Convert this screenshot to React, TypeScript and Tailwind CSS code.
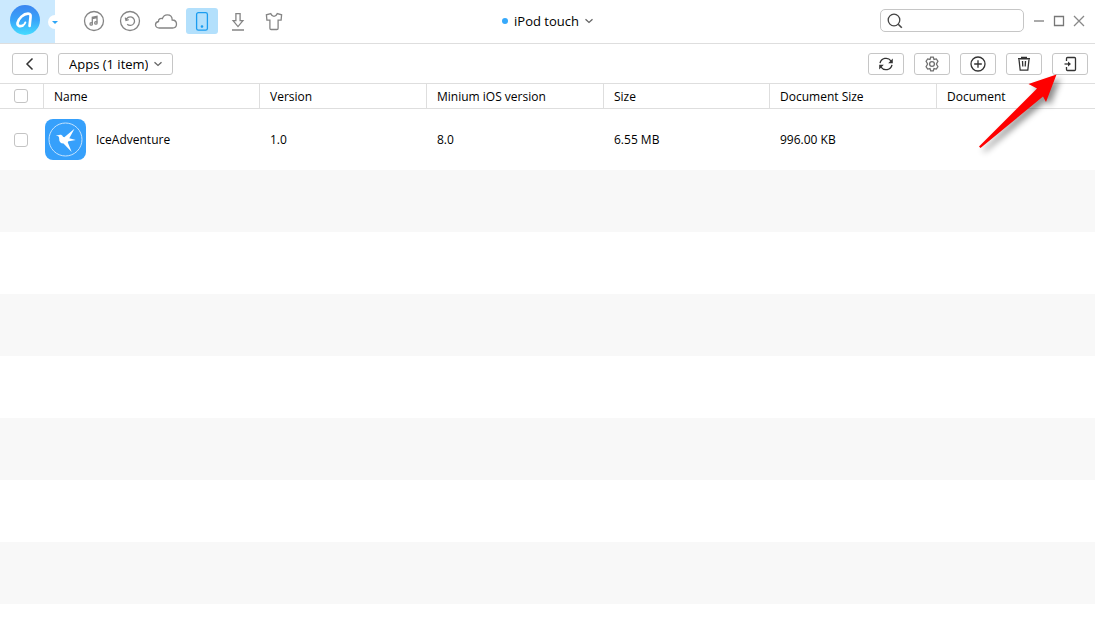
import React from "react";

const columns = [
  { label: "Name", width: "w-[216px]" },
  { label: "Version", width: "w-[167px]" },
  { label: "Minium iOS version", width: "w-[177px]" },
  { label: "Size", width: "w-[166px]" },
  { label: "Document Size", width: "w-[167px]" },
  { label: "Document", width: "" },
];

const apps = [
  {
    name: "IceAdventure",
    version: "1.0",
    minVersion: "8.0",
    size: "6.55 MB",
    documentSize: "996.00 KB",
  },
];

const EMPTY_ROWS = 8;

interface IconProps {
  children: React.ReactNode;
  size?: number;
  className?: string;
}

const Icon = ({ children, size = 24, className = "" }: IconProps) => (
  <svg
    width={size}
    height={size}
    viewBox={`0 0 ${size} ${size}`}
    fill="none"
    stroke="currentColor"
    strokeWidth="1.3"
    className={`shrink-0 ${className}`}
    aria-hidden="true"
  >
    {children}
  </svg>
);

const Chevron = () => (
  <Icon size={8} className="pointer-events-none -ml-3 text-[#666]">
    <path d="M0.5 2.2 4 5.4 7.5 2.2" />
  </Icon>
);

const Logo = () => (
  <svg width="30" height="30" viewBox="0 0 30 30" aria-hidden="true">
    <defs>
      <linearGradient id="logo" x1="0" y1="0" x2="0" y2="1">
        <stop offset="0" stopColor="#3d86f0" />
        <stop offset="0.5" stopColor="#38a4fa" />
        <stop offset="1" stopColor="#45dcff" />
      </linearGradient>
    </defs>
    <circle cx="15" cy="15" r="15" fill="url(#logo)" />
    <path
      d="M12.4 20.8C9.4 21.500 7 20.800 7.600 17.800 8.400 13.600 13.600 8.600 18 8.600c2.500 0 2.800 1.500 2.500 3.800l-.9 8.400"
      fill="none"
      stroke="#fff"
      strokeWidth="2.700"
      strokeLinecap="round"
      strokeLinejoin="round"
    />
    <path
      d="M12.400 20.800c1.600-.5 2.300-1.700 2.900-3.300"
      fill="none"
      stroke="#fff"
      strokeWidth="2"
      strokeLinecap="round"
    />
  </svg>
);

const AppIcon = () => (
  <svg
    width="41"
    height="41"
    viewBox="0 0 41 41"
    className="shrink-0"
    aria-hidden="true"
  >
    <rect width="41" height="41" rx="8" fill="#36a0fb" />
    <circle cx="20.5" cy="20.5" r="16.5" fill="none" stroke="#c4e3fe" />
    <path
      d="M10.800 16.400 14.300 16c1.300-.6 2.800 0 3.700 1.700l1.300.6L29.500 9.800 24.300 19.200l6.500 1.700-7.200 1.400c-.7.400-.9 1-.6 1.800l3.700 8.900-8.200-8.400c-2.900-.3-4.500-2-4.300-4.700 0-1.600-.6-2.600-1.500-2.900z"
      fill="#fff"
    />
  </svg>
);

const navItems = [
  {
    label: "Music",
    icon: (
      <>
        <circle cx="12" cy="12" r="9.5" />
        <path d="M10.300 14.600V8.400l4.700-1v6.200M10.300 9.500l4.700-1" />
        <circle cx="9.200" cy="14.900" r="1.200" />
        <circle cx="13.900" cy="13.900" r="1.200" />
      </>
    ),
  },
  {
    label: "Backup",
    icon: (
      <>
        <circle cx="12" cy="12" r="9.5" />
        <path d="M8 11.400A4.300 4.300 0 1 1 9.200 15.200M7.300 8.600l.7 2.900 2.700-.9" />
      </>
    ),
  },
  {
    label: "Cloud",
    icon: (
      <path d="M5.3 19C3 19 1.5 17.7 1.5 15.8c0-1.7 1.2-2.9 3-3.3-.2-2.3 2-3.7 3.8-2.8 1-2.7 2.7-3.8 4.9-3.8 3 0 5 2.1 5 5.1 2.6.1 4.3 1.7 4.3 4 0 2.4-1.6 4-4 4z" />
    ),
  },
  {
    label: "Device",
    icon: (
      <>
        <rect x="6.6" y="3.6" width="10.8" height="17.6" rx="1.8" />
        <circle cx="12" cy="17.5" r="0.7" fill="currentColor" />
      </>
    ),
  },
  {
    label: "Download",
    icon: (
      <>
        <path d="M9.9 4.6h4.2v7.1h2.8L12 17.6 7.1 11.7h2.8z" />
        <path d="M6 21h12" strokeWidth="1.5" />
      </>
    ),
  },
  {
    label: "Themes",
    icon: (
      <path d="M8.7 4.6 4.4 5.8l.5 5.3h3v8.2c0 .8.4 1.2 1.2 1.2h5.8c.8 0 1.2-.4 1.2-1.2v-8.2h3l.5-5.3-4.3-1.2c-.8 1.700-1.800 2.800-3.300 2.800S9.500 6.300 8.700 4.600z" />
    ),
  },
];

const actions = [
  {
    label: "Refresh",
    icon: (
      <>
        <path d="M3 8.200A6.200 6.200 0 0 1 14 5.800M15 9.800A6.200 6.200 0 0 1 4 12.200" />
        <path
          d="M15.800 3.600v4.600h-4.600zM2.200 14.400V9.800h4.600z"
          fill="currentColor"
          stroke="none"
        />
      </>
    ),
  },
  {
    label: "Settings",
    color: "text-[#707070]",
    icon: (
      <>
        <path d="M7.700 2.200h2.600l.7 2.200 2.300-.5 1.600 2.300L13.400 9l1.500 2.800-1.600 2.300-2.300-.5-.7 2.200H7.700L7 13.600l-2.300.5-1.600-2.300L4.600 9 3.100 6.200l1.600-2.300 2.300.5z" />
        <circle cx="9" cy="9" r="2.400" />
      </>
    ),
  },
  {
    label: "Add",
    icon: (
      <>
        <circle cx="9" cy="9" r="7" />
        <path d="M9 5.200v7.600M5.200 9h7.600" />
      </>
    ),
  },
  {
    label: "Delete",
    icon: (
      <>
        <path d="M3 3.800h12M6 2.500h6" strokeWidth="1.600" />
        <path d="m4 4.500 1.200 10.700h7.600L14 4.500M7.500 6l.3 5.500M10.500 6l-.3 5.500" />
      </>
    ),
  },
  {
    label: "Export to device",
    icon: (
      <>
        <path d="M5.500 6V3.500c0-.7.300-1 1-1h7c.7 0 1 .3 1 1v11c0 .7-.3 1-1 1h-7c-.7 0-1-.3-1-1V12" />
        <path d="M3.500 9h5" />
        <path d="M7 6.400 10 9l-3 2.600z" fill="currentColor" stroke="none" />
      </>
    ),
  },
];

const Checkbox = ({ label }: { label: string }) => (
  <input
    type="checkbox"
    aria-label={label}
    className="ml-[14px] block size-[14px] appearance-none rounded-[3px] border border-[#c4c4c4] bg-white checked:bg-[#36a0fb]"
  />
);

const Header = () => (
  <header className="grid h-11 shrink-0 grid-cols-[1fr_auto_1fr] items-center border-b border-[#dedede]">
    <div className="flex h-full items-center">
      <div className="relative flex h-full w-[55px] items-center bg-[#cbe9fe] pb-[3px] pl-[10px]">
        <Logo />
        <button
          aria-label="Main menu"
          className="absolute top-[15px] -right-[7px] flex size-[14px] items-center justify-center rounded-full bg-white"
        >
          <svg width="6" height="3" viewBox="0 0 6 3" aria-hidden="true">
            <path d="M0 0h6L3 3z" fill="#2ea6f7" />
          </svg>
        </button>
      </div>
      <nav className="flex gap-1 pb-[2px] pl-[23px]">
        {navItems.map((item) => (
          <button
            key={item.label}
            aria-label={item.label}
            className={`flex h-[26px] w-8 items-center justify-center rounded-[3px] ${
              item.label === "Device"
                ? "bg-[#b3e0fc] text-[#1a9cf0]"
                : "text-[#858585]"
            }`}
          >
            <Icon>{item.icon}</Icon>
          </button>
        ))}
      </nav>
    </div>
    <div className="flex items-center pb-[2px]">
      <span className="mr-[6px] size-[6px] rounded-full bg-[#36a9fb]" />
      <select
        aria-label="Device"
        className="field-sizing-content appearance-none pr-[18px] text-[13px] leading-5 outline-none"
      >
        <option>iPod touch</option>
      </select>
      <Chevron />
    </div>
    <div className="flex items-center justify-end pr-[6px] pb-[2px]">
      <label className="mr-[5px] flex h-[23px] w-36 items-center rounded-[5px] border border-[#c6c6c6] pl-[6px]">
        <Icon size={16} className="text-[#444]">
          <circle cx="7" cy="7" r="5.800" />
          <path d="m11.200 11.200 3.600 3.600" strokeWidth="1.600" />
        </Icon>
        <input
          type="text"
          aria-label="Search"
          className="w-full min-w-0 px-1 text-xs outline-none"
        />
      </label>
      <button aria-label="Minimize" className="flex w-5 justify-center text-[#aaa]">
        <Icon size={12}>
          <path d="M1 6h10" strokeWidth="2" />
        </Icon>
      </button>
      <button aria-label="Maximize" className="flex w-5 justify-center text-[#777]">
        <Icon size={12}>
          <path d="M1.500 1.500h9v9h-9z" />
        </Icon>
      </button>
      <button aria-label="Close" className="flex w-5 justify-center text-[#888]">
        <Icon size={12}>
          <path d="m1 1 10 10M11 1 1 11" />
        </Icon>
      </button>
    </div>
  </header>
);

const Toolbar = () => (
  <div className="flex h-10 shrink-0 items-center gap-[10px] border-b border-[#dedede] pr-[7px] pl-3">
    <button
      aria-label="Back"
      className="flex h-[22px] w-9 items-center justify-center rounded-[3px] border border-[#c6c6c6] text-[#333]"
    >
      <Icon size={14}>
        <path d="M9.500 1.500 4 7l5.500 5.500" strokeWidth="1.500" />
      </Icon>
    </button>
    <div className="mr-auto flex h-[22px] items-center rounded-[3px] border border-[#c6c6c6] px-[10px]">
      <select
        aria-label="Category"
        className="field-sizing-content appearance-none pr-[18px] text-[13px] leading-5 outline-none"
      >
        <option>Apps (1 item)</option>
      </select>
      <Chevron />
    </div>
    <div className="relative flex gap-[10px]">
      {actions.map((action) => (
        <button
          key={action.label}
          aria-label={action.label}
          className={`flex h-[22px] w-9 items-center justify-center rounded-[3px] border border-[#c6c6c6] ${
            action.color ?? "text-[#333]"
          }`}
        >
          <Icon size={18}>{action.icon}</Icon>
        </button>
      ))}
      <Pointer />
    </div>
  </div>
);

const Pointer = () => (
  <svg
    width="90"
    height="90"
    viewBox="0 0 90 90"
    className="pointer-events-none absolute top-[17px] right-[24px] drop-shadow-[4px_4px_3px_rgba(0,0,0,0.45)]"
    aria-hidden="true"
  >
    <path
      d="M82.500 4.500 54.500 14 63 18.500 5 76.500 6.500 78 69 26.500 72 32z"
      fill="#fe0000"
    />
  </svg>
);

const AppTable = () => (
  <table className="w-full table-fixed border-separate border-spacing-0 text-left text-xs">
    <thead>
      <tr className="h-[25px]">
        <th className="w-11 border-r border-b border-[#dedede] p-0">
          <Checkbox label="Select all" />
        </th>
        {columns.map((column) => (
          <th
            key={column.label}
            className={`${column.width} truncate border-b border-[#dedede] pt-[2px] pb-0 pl-[10px] font-normal not-last:border-r`}
          >
            {column.label}
          </th>
        ))}
      </tr>
    </thead>
    <tbody>
      {apps.map((app) => (
        <tr key={app.name} className="h-[61px]">
          <td className="p-0">
            <Checkbox label={`Select ${app.name}`} />
          </td>
          <td className="p-0 pl-px">
            <div className="flex items-center gap-[10px]">
              <AppIcon />
              {app.name}
            </div>
          </td>
          <td className="p-0 pl-[10px]">{app.version}</td>
          <td className="p-0 pl-[10px]">{app.minVersion}</td>
          <td className="p-0 pl-[10px]">{app.size}</td>
          <td className="p-0 pl-[10px]">{app.documentSize}</td>
          <td className="p-0" />
        </tr>
      ))}
      {Array.from({ length: EMPTY_ROWS }, (_, i) => (
        <tr key={i} className="h-[62px] odd:bg-white even:bg-[#f8f8f8]">
          <td colSpan={7} className="p-0" />
        </tr>
      ))}
    </tbody>
  </table>
);

const App = () => {
  return (
    <div className="flex h-screen flex-col overflow-hidden bg-white font-['Open_Sans','Noto_Sans',sans-serif] text-black">
      <Header />
      <Toolbar />
      <main className="min-h-0 flex-1 overflow-hidden">
        <AppTable />
      </main>
    </div>
  );
};

export default App;
